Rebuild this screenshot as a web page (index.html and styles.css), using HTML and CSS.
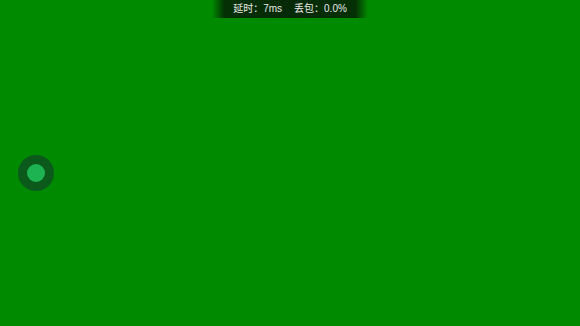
FILE: index.html
```html
<!DOCTYPE html>
<html lang="zh-CN">
    <head>
        <meta charset="UTF-8" />
        <meta name="viewport" content="width=device-width, initial-scale=1.0" />
        <title>Game Stream</title>
        <link rel="stylesheet" href="styles.css">
    </head>
    <body>
        <div class="screen">
            <div class="status-bar">
                <span class="stat">延时：7ms</span>
                <span class="stat">丢包：0.0%</span>
            </div>
            <div class="stage">
                <div class="joystick">
                    <div class="knob"></div>
                </div>
            </div>
        </div>
    </body>
</html>
```

FILE: styles.css
```css
html, body {
    margin: 0;
    height: 100%;
}
body {
    font-family: "Liberation Sans", "Noto Sans CJK TC", sans-serif;
    background-color: #008a00;
    color: #e8e8e8;
}
.screen {
    display: flex;
    flex-direction: column;
    height: 100%;
}
.status-bar {
    align-self: center;
    display: flex;
    justify-content: center;
    gap: 12px;
    width: 156px;
    height: 18px;
    line-height: 17px;
    font-size: 10px;
    background: linear-gradient(to right, rgba(0, 40, 0, 0) 0%, rgba(5, 38, 5, 0.9) 8%, #062a06 50%, rgba(5, 38, 5, 0.9) 92%, rgba(0, 40, 0, 0) 100%);
}
.stage {
    flex: 1;
    display: flex;
    align-items: center;
    padding-left: 18px;
    padding-top: 2px;
}
.joystick {
    width: 36px;
    height: 36px;
    border-radius: 50%;
    background: #0b5a1c;
    display: flex;
    justify-content: center;
    align-items: center;
}
.knob {
    width: 18px;
    height: 18px;
    border-radius: 50%;
    background: #1db352;
}
```
